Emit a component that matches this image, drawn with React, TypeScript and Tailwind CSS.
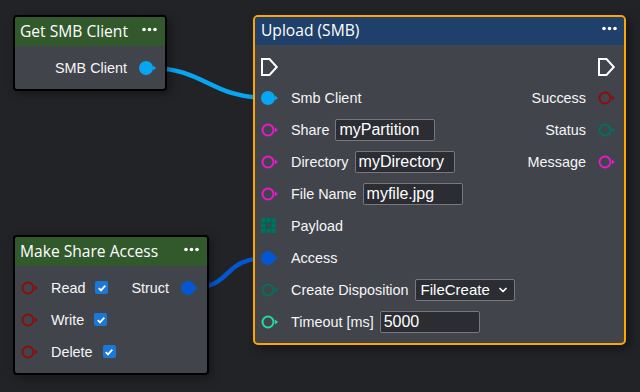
import { ChevronDown } from 'lucide-react';

const body = "font-['Liberation_Sans',Arial,sans-serif]";
const title = "font-['Open_Sans','Noto_Sans',sans-serif]";

const C = {
  azure: '#06a6f0',
  royal: '#0358d2',
  magenta: '#e31cc9',
  red: '#8e0c0c',
  teal: '#02705e',
  mint: '#26d8a6',
};

const Pin = ({ color, filled }: { color: string; filled?: boolean }) => (
  <svg width="18" height="14" viewBox="0 0 18 14" className="shrink-0">
    {filled ? (
      <circle cx="7" cy="7" r="7" fill={color} />
    ) : (
      <circle cx="7" cy="7" r="5.5" fill="none" stroke={color} strokeWidth="2" />
    )}
    <path d="M14 4.5 L17 7 L14 9.5 Z" fill={color} />
  </svg>
);

const ExecPin = () => (
  <svg width="18" height="18" viewBox="0 0 18 18" className="shrink-0">
    <path d="M1 1 H8.5 L15.8 9 L8.5 17 H1 Z" fill="none" stroke="#ffffff" strokeWidth="2" />
  </svg>
);

const StructIcon = ({ color }: { color: string }) => (
  <svg width="18" height="15" viewBox="0 0 18 15" className="shrink-0">
    <rect x="0" y="0" width="15" height="15" fill={color} />
    <rect x="5" y="5" width="5" height="5" fill="#41444b" />
    <path d="M5 0 V15 M10 0 V15 M0 5 H15 M0 10 H15" stroke="#0b5a4d" strokeWidth="1" />
  </svg>
);

const Dots = () => (
  <svg width="15" height="5" viewBox="0 0 15 5" className="shrink-0 mb-[5px]">
    <circle cx="2" cy="2.5" r="1.8" fill="#ffffff" />
    <circle cx="7.5" cy="2.5" r="1.8" fill="#ffffff" />
    <circle cx="13" cy="2.5" r="1.8" fill="#ffffff" />
  </svg>
);

const Check = () => (
  <span className="ml-[10px] flex h-[13px] w-[13px] items-center justify-center rounded-[2px] bg-[#1b78d6]">
    <svg width="10" height="10" viewBox="0 0 10 10">
      <path d="M1.8 5.2 L4 7.4 L8.3 2.6" fill="none" stroke="#ffffff" strokeWidth="1.8" />
    </svg>
  </span>
);

const Field = ({ value }: { value: string }) => (
  <input
    readOnly
    value={value}
    className={`${body} ml-[6px] h-[22px] w-[100px] rounded-[2px] border border-[#75787d] bg-[#2b2d33] px-[3px] text-[16px] text-white outline-none`}
  />
);

const Header = ({ text, color }: { text: string; color: string }) => (
  <div className={`flex h-[29px] items-center justify-between pl-[5px] pr-[8px] ${color}`}>
    <span className={`${title} text-[15.6px] text-white`}>{text}</span>
    <Dots />
  </div>
);

const Row = ({ children }: { children: React.ReactNode }) => (
  <div className="flex h-8 items-center justify-between">{children}</div>
);

const Left = ({ icon, label, children }: { icon: React.ReactNode; label: string; children?: React.ReactNode }) => (
  <div className="flex items-center">
    <span className="flex w-[18px] items-center">{icon}</span>
    <span className="ml-[12px] mt-[2px]">{label}</span>
    {children}
  </div>
);

const Right = ({ label, icon }: { label: string; icon: React.ReactNode }) => (
  <div className="flex items-center gap-[12px]">
    <span className="mt-[2px]">{label}</span>
    {icon}
  </div>
);

const Wires = () => (
  <svg width="640" height="392" className="absolute inset-0">
    <path d="M150 68 C 205 68, 210 98, 268 98" fill="none" stroke={C.azure} strokeWidth="4.5" />
    <path d="M190 288 C 235 288, 220 258, 268 258" fill="none" stroke={C.royal} strokeWidth="4.5" />
  </svg>
);

export default function App() {
  return (
    <div className={`${body} relative h-[392px] w-[640px] overflow-hidden bg-[#222327] text-[14.4px] text-[#f6f6f6]`}>
      <Wires />

      {/* Get SMB Client */}
      <div className="absolute left-[13px] top-[15px] w-[154px] overflow-hidden rounded-[4px] border-2 border-black bg-[#41444b] shadow-[3px_3px_8px_rgba(0,0,0,0.35)]">
        <Header text="Get SMB Client" color="bg-[#32592b]" />
        <div className="pb-[5px] pl-[6px] pr-[8px] pt-[6px]">
          <div className="flex h-8 items-center justify-end">
            <Right label="SMB Client" icon={<Pin color={C.azure} filled />} />
          </div>
        </div>
      </div>

      {/* Make Share Access */}
      <div className="absolute left-[13px] top-[235px] w-[196px] overflow-hidden rounded-[4px] border-2 border-black bg-[#41444b] shadow-[3px_3px_8px_rgba(0,0,0,0.35)]">
        <Header text="Make Share Access" color="bg-[#32592b]" />
        <div className="pb-[5px] pl-[6px] pr-[8px] pt-[6px]">
          <Row>
            <Left icon={<Pin color={C.red} />} label="Read">
              <Check />
            </Left>
            <Right label="Struct" icon={<Pin color={C.royal} filled />} />
          </Row>
          <Row>
            <Left icon={<Pin color={C.red} />} label="Write">
              <Check />
            </Left>
          </Row>
          <Row>
            <Left icon={<Pin color={C.red} />} label="Delete">
              <Check />
            </Left>
          </Row>
        </div>
      </div>

      {/* Upload (SMB) */}
      <div className="absolute left-[253px] top-[15px] w-[373px] overflow-hidden rounded-[5px] border-2 border-[#ffa500] bg-[#41444b] shadow-[4px_4px_10px_rgba(0,0,0,0.4)]">
        <div className="flex h-[28px] items-center justify-between pl-[6px] pr-[7px] bg-[#1f406b]">
          <span className={`${title} text-[15.6px] text-white`}>Upload (SMB)</span>
          <Dots />
        </div>
        <div className="pb-[5px] pl-[6px] pr-[8px] pt-[6px]">
          <div className="flex h-[31px] items-center justify-between">
            <ExecPin />
            <ExecPin />
          </div>
          <Row>
            <Left icon={<Pin color={C.azure} filled />} label="Smb Client" />
            <Right label="Success" icon={<Pin color={C.red} />} />
          </Row>
          <Row>
            <Left icon={<Pin color={C.magenta} />} label="Share">
              <Field value="myPartition" />
            </Left>
            <Right label="Status" icon={<Pin color={C.teal} />} />
          </Row>
          <Row>
            <Left icon={<Pin color={C.magenta} />} label="Directory">
              <Field value="myDirectory" />
            </Left>
            <Right label="Message" icon={<Pin color={C.magenta} />} />
          </Row>
          <Row>
            <Left icon={<Pin color={C.magenta} />} label="File Name">
              <Field value="myfile.jpg" />
            </Left>
          </Row>
          <Row>
            <Left icon={<StructIcon color={C.teal} />} label="Payload" />
          </Row>
          <Row>
            <Left icon={<Pin color={C.royal} filled />} label="Access" />
          </Row>
          <Row>
            <Left icon={<Pin color={C.teal} />} label="Create Disposition">
              <div className="ml-[6px] flex h-[22px] w-[100px] items-center justify-between rounded-[2px] border border-[#75787d] bg-[#2b2d33] pl-[5px] pr-[5px] text-[15px] text-white">
                <span>FileCreate</span>
                <ChevronDown size={12} strokeWidth={3.5} className="text-white" />
              </div>
            </Left>
          </Row>
          <Row>
            <Left icon={<Pin color={C.mint} />} label="Timeout [ms]">
              <Field value="5000" />
            </Left>
          </Row>
        </div>
      </div>
    </div>
  );
}
